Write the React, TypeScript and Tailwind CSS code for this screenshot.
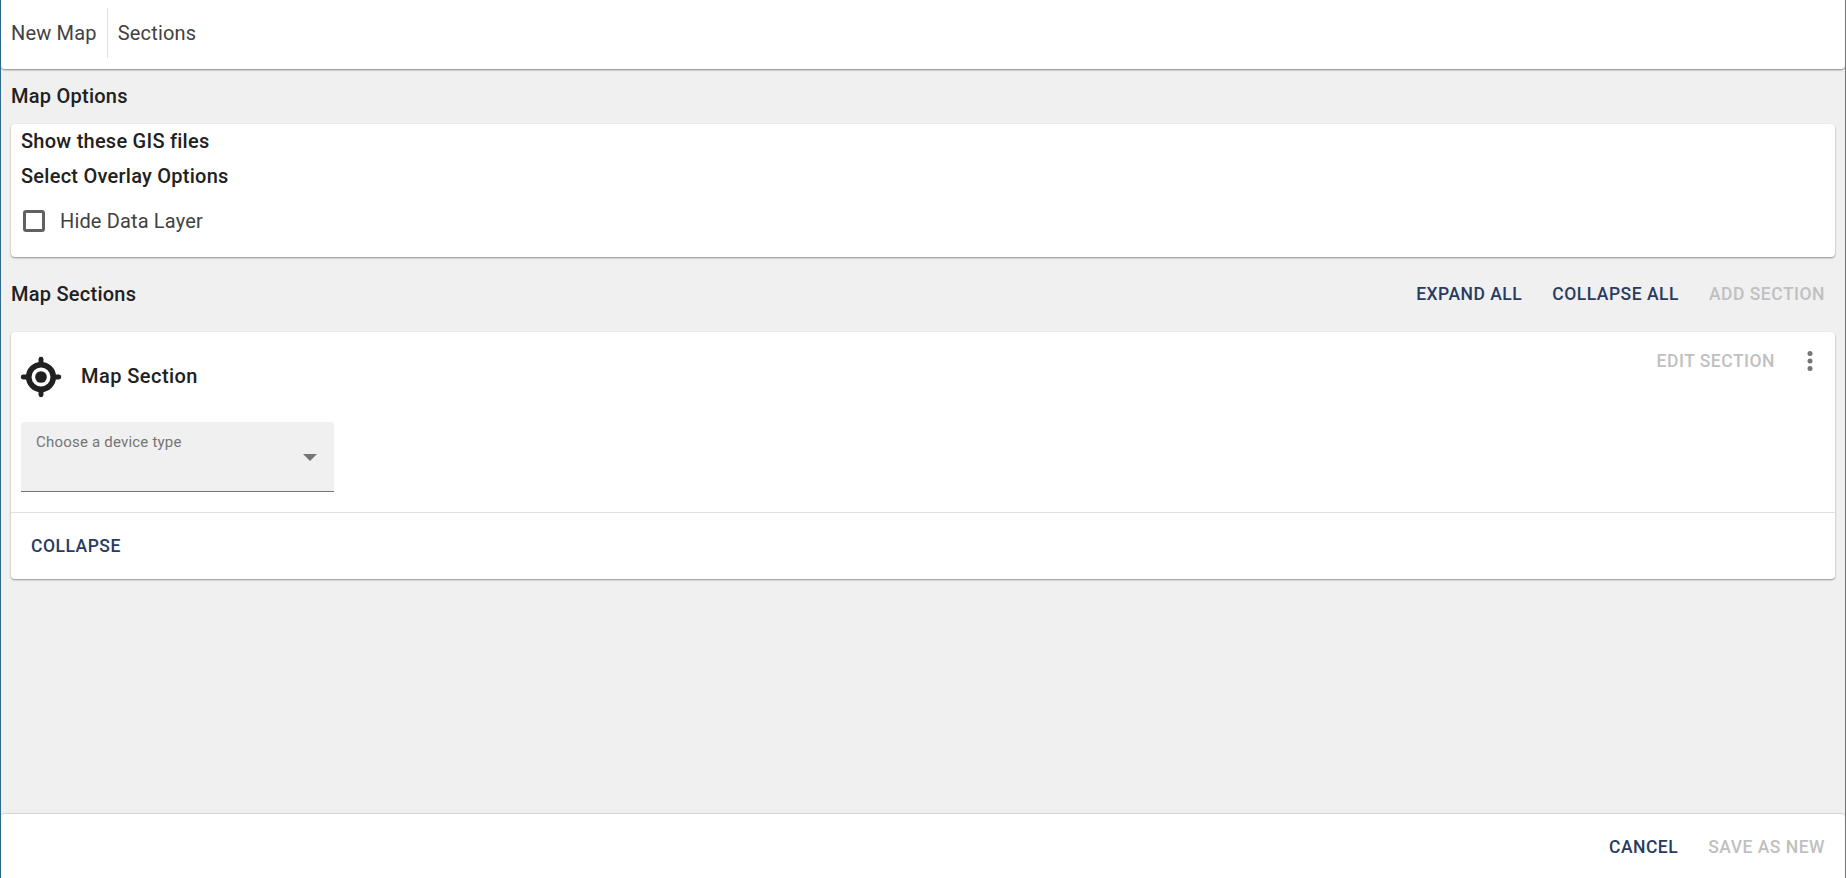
import React from 'react';

const font = "font-['Roboto',sans-serif]";

const TextButton = ({ label, disabled }: { label: string; disabled?: boolean }) => (
  <button className={`px-[10px] h-9 text-[17.5px] font-medium tracking-[0.5px] leading-9 ${disabled ? 'text-[#c0c0c0]' : 'text-[#2a3b60]'}`}>
    {label}
  </button>
);

const GpsIcon = () => (
  <svg width="54" height="54" viewBox="0 0 24 24" fill="#212121">
    <circle cx="12" cy="12" r="2.6" />
    <circle cx="12" cy="12" r="5.45" fill="none" stroke="#212121" strokeWidth="2.5" />
    <rect x="10.9" y="3" width="2.2" height="4" rx="1.1" />
    <rect x="10.9" y="17" width="2.2" height="4" rx="1.1" />
    <rect x="3" y="10.9" width="4" height="2.2" rx="1.1" />
    <rect x="17" y="10.9" width="4" height="2.2" rx="1.1" />
  </svg>
);

export default function App() {
  return (
    <div className={`${font} flex flex-col h-[878px] w-[1846px] bg-[#f0f0f0] border-l-[1.5px] border-l-[#31698a] border-r-[1.5px] border-r-[#757575] text-[#212121] overflow-hidden`}>
      {/* top bar */}
      <div className="flex items-center h-[69px] pb-[3px] shrink-0 bg-white rounded-b shadow-[0_1px_2px_rgba(0,0,0,0.45)] text-[20px] text-[#424242] tracking-[0.18px]">
        <div className="flex items-center h-[50px] pl-[10px] pr-[10px] border-r border-[#e0e0e0]">New Map</div>
        <div className="pl-[10px]">Sections</div>
      </div>

      <div className="flex-1 px-[10px]">
        <h2 className="mt-[14px] text-[20px] leading-[27px] font-medium tracking-[0.25px]">Map Options</h2>

        <div className="mt-[14px] h-[133px] bg-white rounded shadow-[0_1px_2px_rgba(0,0,0,0.4)] px-[10px]">
          <div className="pt-[4px] text-[20px] leading-[27px] font-medium tracking-[0.25px]">Show these GIS files</div>
          <div className="mt-[8px] text-[20px] leading-[27px] font-medium tracking-[0.25px]">Select Overlay Options</div>
          <label className="mt-[13px] flex items-center h-[36px] text-[20px] text-[#424242] tracking-[0.15px]">
            <span className="ml-[2px] w-[22px] h-[22px] rounded-[3px] border-[3px] border-[#616161]" />
            <span className="ml-[15px]">Hide Data Layer</span>
          </label>
        </div>

        <div className="mt-[19px] flex items-center justify-between h-[36px]">
          <h2 className="text-[20px] font-medium tracking-[0.25px]">Map Sections</h2>
          <div className="flex items-center gap-[10px]">
            <TextButton label="EXPAND ALL" />
            <TextButton label="COLLAPSE ALL" />
            <TextButton label="ADD SECTION" disabled />
          </div>
        </div>

        <div className="mt-[20px] h-[247px] bg-white rounded shadow-[0_1px_2px_rgba(0,0,0,0.4)]">
          <div className="flex justify-between h-[90px]">
            <div className="flex items-start pl-[3px] pt-[18px]">
              <GpsIcon />
              <span className="ml-[13px] mt-[13px] text-[20px] leading-[27px] font-medium tracking-[0.45px]">Map Section</span>
            </div>
            <div className="flex items-start pt-[11px] pr-[10px]">
              <TextButton label="EDIT SECTION" disabled />
              <svg className="ml-[10px] mt-[3px]" width="30" height="30" viewBox="0 0 24 24" fill="#757575">
                <circle cx="12" cy="6" r="2" />
                <circle cx="12" cy="12" r="2" />
                <circle cx="12" cy="18" r="2" />
              </svg>
            </div>
          </div>
          <div className="relative ml-[10px] w-[313px] h-[70px] bg-[#f0f0f0] rounded-t border-b border-[#757575]">
            <span className="absolute left-[15px] top-[10px] text-[15px] leading-[20px] text-[#757575] tracking-[0.2px]">Choose a device type</span>
            <span className="absolute right-[17px] top-[32px] w-0 h-0 border-x-[7px] border-x-transparent border-t-[7px] border-t-[#757575]" />
          </div>
          <div className="mt-[20px] h-[66px] border-t border-[#e0e0e0] pl-[10px] flex items-center">
            <TextButton label="COLLAPSE" />
          </div>
        </div>
      </div>

      {/* footer */}
      <div className="flex items-center justify-end gap-[10px] h-[64px] pt-[2px] shrink-0 bg-white rounded-t shadow-[0_-1px_1px_rgba(0,0,0,0.12)] pr-[10px]">
        <TextButton label="CANCEL" />
        <TextButton label="SAVE AS NEW" disabled />
      </div>
    </div>
  );
}
